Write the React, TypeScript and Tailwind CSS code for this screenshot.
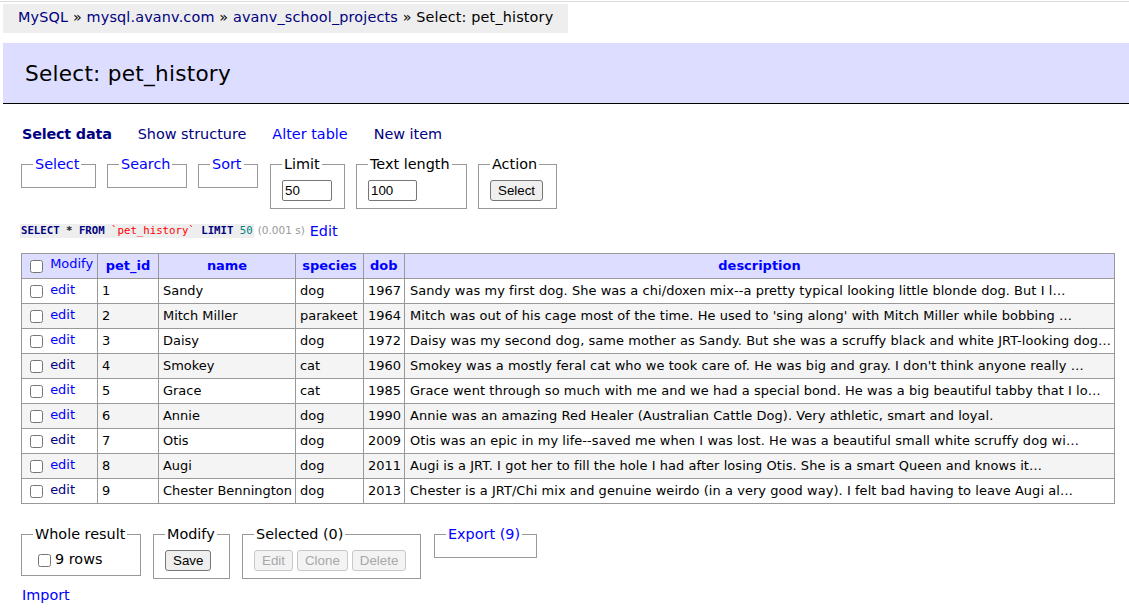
const rows = [
  { id: 1, name: "Sandy", species: "dog", dob: 1967, visited: false, desc: "Sandy was my first dog. She was a chi/doxen mix--a pretty typical looking little blonde dog. But I l…" },
  { id: 2, name: "Mitch Miller", species: "parakeet", dob: 1964, visited: false, desc: "Mitch was out of his cage most of the time. He used to 'sing along' with Mitch Miller while bobbing …" },
  { id: 3, name: "Daisy", species: "dog", dob: 1972, visited: false, desc: "Daisy was my second dog, same mother as Sandy. But she was a scruffy black and white JRT-looking dog…" },
  { id: 4, name: "Smokey", species: "cat", dob: 1960, visited: true, desc: "Smokey was a mostly feral cat who we took care of. He was big and gray. I don't think anyone really …" },
  { id: 5, name: "Grace", species: "cat", dob: 1985, visited: false, desc: "Grace went through so much with me and we had a special bond. He was a big beautiful tabby that I lo…" },
  { id: 6, name: "Annie", species: "dog", dob: 1990, visited: false, desc: "Annie was an amazing Red Healer (Australian Cattle Dog). Very athletic, smart and loyal." },
  { id: 7, name: "Otis", species: "dog", dob: 2009, visited: true, desc: "Otis was an epic in my life--saved me when I was lost. He was a beautiful small white scruffy dog wi…" },
  { id: 8, name: "Augi", species: "dog", dob: 2011, visited: false, desc: "Augi is a JRT. I got her to fill the hole I had after losing Otis. She is a smart Queen and knows it…" },
  { id: 9, name: "Chester Bennington", species: "dog", dob: 2013, visited: true, desc: "Chester is a JRT/Chi mix and genuine weirdo (in a very good way). I felt bad having to leave Augi al…" },
];

const checkbox = "m-[3px_3px_3px_4px] h-[13px] w-[13px] align-middle";
const fieldset = "border border-[#999] px-[11px] py-[7px]";
const legend = "whitespace-nowrap px-[2px] leading-[18px]";
const ctrlFont = "font-['Liberation_Sans',Arial,sans-serif] text-[13.33px]";
const button = `${ctrlFont} h-[21px] rounded-[3px] border border-[#767676] bg-[#efefef] px-[7px] leading-[17px] text-black`;
const disabledButton = `${ctrlFont} h-[21px] rounded-[3px] border border-[#c8c8c8] bg-[#f3f3f3] px-[7px] leading-[17px] text-[#a8a8a8]`;

export default function App() {
  return (
    <div className="min-h-screen bg-white font-['DejaVu_Sans',Verdana,sans-serif] text-[14.4px] leading-[1.25] text-black">
      <div className="pt-[1px]">
        <div className="h-[1px] bg-[#dcdcdc]" />
      </div>
      <div className="pl-[3px] pt-[2px]">
        <p className="inline-block h-[29px] whitespace-nowrap bg-[#eee] px-[15px] leading-[27px] tracking-[0.15px]">
          <a className="text-[#000080]">MySQL</a> » <a className="text-[#000080]">mysql.avanv.com</a> »{" "}
          <a className="text-[#000080]">avanv_school_projects</a> » Select: pet_history
        </p>
        <h2 className="mt-[10px] h-[61px] border-b border-black bg-[#ddf] pl-[22px] text-[21.6px] leading-[62px] tracking-[0.25px]">
          Select: pet_history
        </h2>
      </div>

      <div className="pl-[22px] pr-[15px]">
        <p className="mt-[21px] flex gap-[26px] whitespace-nowrap">
          <a className="font-bold tracking-[-0.2px] text-[#000080]">Select data</a>
          <a className="text-[#000080]">Show structure</a>
          <a className="text-[#0000ff]">Alter table</a>
          <a className="text-[#000080]">New item</a>
        </p>

        <div className="-ml-[1px] mt-[12px] flex items-start gap-[11px]">
          <fieldset className={`${fieldset} w-[75px]`}>
            <legend className={`${legend} text-[#0000ff]`}>Select</legend>
          </fieldset>
          <fieldset className={`${fieldset} w-[80px]`}>
            <legend className={`${legend} text-[#0000ff]`}>Search</legend>
          </fieldset>
          <fieldset className={`${fieldset} w-[60px]`}>
            <legend className={`${legend} text-[#0000ff]`}>Sort</legend>
          </fieldset>
          <fieldset className={`${fieldset} ml-[1px] w-[75px]`}>
            <legend className={legend}>Limit</legend>
            <input
              defaultValue="50"
              className={`${ctrlFont} block h-[21px] w-[50px] rounded-[2px] border border-[#767676] px-[2px]`}
            />
          </fieldset>
          <fieldset className={`${fieldset} w-[111px]`}>
            <legend className={legend}>Text length</legend>
            <input
              defaultValue="100"
              className={`${ctrlFont} block h-[21px] w-[49px] rounded-[2px] border border-[#767676] px-[2px]`}
            />
          </fieldset>
          <fieldset className={`${fieldset} w-[79px]`}>
            <legend className={legend}>Action</legend>
            <button className={`${button} block w-[53px] px-[6px]`}>Select</button>
          </fieldset>
        </div>

        <p className="-ml-[2px] mt-[13px] flex h-[18px] items-center whitespace-nowrap">
          <code className="bg-[#eee] px-[1px] font-['DejaVu_Sans_Mono',monospace] text-[10.7px] font-semibold leading-[14px]">
            <span className="text-[#000080]">SELECT</span> <span className="text-[#222]">*</span>{" "}
            <span className="text-[#000080]">FROM</span> <span className="font-normal text-[#ff0000]">`pet_history`</span>{" "}
            <span className="text-[#000080]">LIMIT</span> <span className="font-normal text-[#008080]">50</span>
          </code>
          <span className="ml-[4px] text-[10.5px] text-[#999]">(0.001 s)</span>
          <a className="ml-[5px] text-[#0000ff]">Edit</a>
        </p>

        <table className="-ml-[1px] mt-[13px] w-[1094px] table-fixed border-collapse text-[12.96px]">
          <colgroup>
            <col className="w-[76px]" />
            <col className="w-[61px]" />
            <col className="w-[137px]" />
            <col className="w-[68px]" />
            <col className="w-[41px]" />
            <col />
          </colgroup>
          <thead>
            <tr className="h-[25px] bg-[#ddf]">
              <td className="whitespace-nowrap border border-[#999] px-[4px] align-middle">
                <input type="checkbox" className={checkbox} />{" "}
                <a className="relative -top-[2px] text-[#0000ff]">Modify</a>
              </td>
              <th className="border border-[#999] px-[6px] text-center font-bold text-[#0000ff]">pet_id</th>
              <th className="border border-[#999] px-[6px] text-center font-bold text-[#0000ff]">name</th>
              <th className="border border-[#999] px-[4px] text-center font-bold text-[#0000ff]">species</th>
              <th className="border border-[#999] px-[6px] text-left font-bold text-[#0000ff]">dob</th>
              <th className="border border-[#999] px-[6px] text-center font-bold text-[#0000ff]">description</th>
            </tr>
          </thead>
          <tbody>
            {rows.map((r, i) => (
              <tr key={r.id} className={`h-[25px] ${i % 2 === 1 ? "bg-[#f4f4f4]" : "bg-white"}`}>
                <td className="whitespace-nowrap border border-[#999] px-[4px] align-middle">
                  <input type="checkbox" className={checkbox} />{" "}
                  <a className={`relative -top-[1px] ${r.visited ? "text-[#000080]" : "text-[#0000ff]"}`}>edit</a>
                </td>
                <td className="border border-[#999] px-[4px]">{r.id}</td>
                <td className="whitespace-nowrap border border-[#999] px-[4px]">{r.name}</td>
                <td className="border border-[#999] px-[4px]">{r.species}</td>
                <td className="border border-[#999] px-[4px]">{r.dob}</td>
                <td className="whitespace-nowrap border border-[#999] px-[5px] tracking-[0.07px]">{r.desc}</td>
              </tr>
            ))}
          </tbody>
        </table>

        <div className="-ml-[1px] mt-[21px] flex items-start">
          <fieldset className={`${fieldset} w-[120px]`}>
            <legend className={legend}>Whole result</legend>
            <label className="flex items-center whitespace-nowrap">
              <input type="checkbox" className="m-[3px_4px_0_5px] h-[13px] w-[13px]" />9 rows
            </label>
          </fieldset>
          <fieldset className={`${fieldset} ml-[12px] w-[77px]`}>
            <legend className={legend}>Modify</legend>
            <button className={`${button} block`}>Save</button>
          </fieldset>
          <fieldset className={`${fieldset} ml-[12px] w-[179px]`}>
            <legend className={legend}>Selected (0)</legend>
            <div className="flex gap-[4px]">
              <button className={disabledButton}>Edit</button>
              <button className={disabledButton}>Clone</button>
              <button className={disabledButton}>Delete</button>
            </div>
          </fieldset>
          <fieldset className={`${fieldset} ml-[13px] w-[103px]`}>
            <legend className={`${legend} text-[#0000ff]`}>Export (9)</legend>
          </fieldset>
        </div>

        <p className="mt-[7px] pb-[10px]">
          <a className="text-[#0000ff]">Import</a>
        </p>
      </div>
    </div>
  );
}
